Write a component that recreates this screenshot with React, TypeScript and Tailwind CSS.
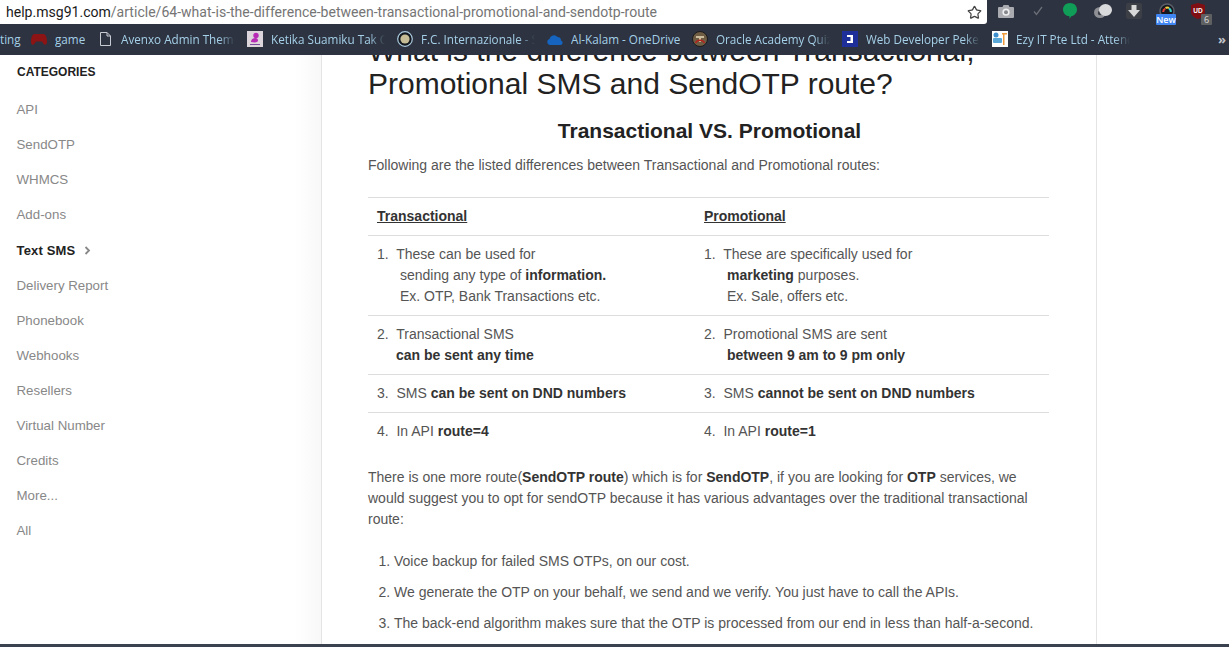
import React from 'react';
import { Star } from 'lucide-react';

const categories = ['API', 'SendOTP', 'WHMCS', 'Add-ons', 'Text SMS', 'Delivery Report', 'Phonebook', 'Webhooks', 'Resellers', 'Virtual Number', 'Credits', 'More...', 'All'];

function Toolbar() {
  return (
    <div className="flex h-6 shrink-0 bg-[#2d3340]">
      <div className="flex w-[987px] items-center justify-between rounded-br-[3px] bg-white pl-[6px] pr-[5px]">
        <div className="truncate font-['Roboto',sans-serif] text-[14.050px] leading-6 text-[#757575]">
          <span className="text-[#1a1a1a]">help.msg91.com</span>/article/64-what-is-the-difference-between-transactional-promotional-and-sendotp-route
        </div>
        <Star size={15} strokeWidth={2} className="shrink-0 text-[#444]" />
      </div>
      <div className="relative flex-1">
        {/* camera */}
        <svg className="absolute left-[11px] top-[5px]" width="16" height="13" viewBox="0 0 16 13">
          <path d="M1 2h3.500L5.500 0h5l1 2H15a1 1 0 0 1 1 1v9a1 1 0 0 1-1 1H1a1 1 0 0 1-1-1V3a1 1 0 0 1 1-1z" fill="#a9abb0" />
          <circle cx="8" cy="7.200" r="3.600" fill="#eeeeee" />
          <circle cx="8" cy="7.200" r="2" fill="#85878d" />
        </svg>
        {/* check */}
        <svg className="absolute left-[46px] top-[6px]" width="10" height="10" viewBox="0 0 10 10">
          <path d="M1 5.500l2.500 3L9 1" fill="none" stroke="#6a6e77" strokeWidth="1.300" />
        </svg>
        {/* green speech bubble */}
        <svg className="absolute left-[76px] top-[3px]" width="14" height="16" viewBox="0 0 14 16">
          <path d="M7 0c3.900 0 7 2.800 7 6.400 0 3.400-2.500 6-5.800 6.800L6.500 16v-2.800C2.800 13 0 10 0 6.400 0 2.800 3.100 0 7 0z" fill="#0f9d58" />
        </svg>
        {/* cloud blob */}
        <svg className="absolute left-[107px] top-[4px]" width="18" height="14" viewBox="0 0 18 14">
          <ellipse cx="6" cy="8.500" rx="6" ry="5.500" fill="#8e9095" />
          <circle cx="6" cy="9" r="2.200" fill="#3a3e47" />
          <ellipse cx="11.500" cy="6" rx="6.500" ry="6" fill="#d9dadc" />
        </svg>
        {/* download */}
        <div className="absolute left-[139px] top-[3px] flex h-[16px] w-[16px] items-center justify-center rounded-[2px] bg-[#3c3f45]">
          <svg width="12" height="12" viewBox="0 0 12 12">
            <path d="M3.500 0h5v5H12L6 12 0 5h3.500z" fill="#d8d8d8" />
          </svg>
        </div>
        {/* colour ring with badge */}
        <svg className="absolute left-[172px] top-[3px]" width="16" height="14" viewBox="0 0 16 14">
          <circle cx="8" cy="8" r="7" fill="#15181e" stroke="#5a5f69" strokeWidth="1.500" />
          <path d="M4.200 9a3.800 3.800 0 0 1 2-3.400" fill="none" stroke="#e53935" strokeWidth="2" />
          <path d="M6.500 5a3.800 3.800 0 0 1 3.500 0" fill="none" stroke="#f4d03f" strokeWidth="2" />
          <path d="M10 5.300A3.800 3.800 0 0 1 11.800 9" fill="none" stroke="#38d0c8" strokeWidth="2" />
        </svg>
        <div className="absolute left-[169px] top-[14px] z-10 h-[11px] w-[20px] rounded-[1px] bg-[#3f86f2] text-center font-['Open_Sans',sans-serif] text-[9px] font-semibold leading-[11px] text-white">New</div>
        {/* uBlock shield */}
        <svg className="absolute left-[204px] top-[3px]" width="14" height="16" viewBox="0 0 14 16">
          <path d="M7 0l7 2v7c0 3-3 5.500-7 7-4-1.500-7-4-7-7V2z" fill="#800f14" />
          <text x="7" y="9.500" textAnchor="middle" fontSize="6.500" fontWeight="700" fill="#fff" fontFamily="Liberation Sans, sans-serif">UD</text>
        </svg>
        <div className="absolute left-[214px] top-[14px] z-10 h-[11px] w-[11px] rounded-[1px] bg-[#5f6062] text-center font-['Open_Sans',sans-serif] text-[9px] leading-[11px] text-[#ddd]">6</div>
      </div>
    </div>
  );
}

function Bookmark({ icon, label, className, fade = true }: { icon: React.ReactNode; label: string; className: string; fade?: boolean }) {
  return (
    <div className={`flex shrink-0 items-center gap-[8px] pr-[12px] ${className}`}>
      <span className="flex h-4 w-4 shrink-0 items-center justify-center">{icon}</span>
      <span className={`overflow-hidden whitespace-nowrap ${fade ? '[mask-image:linear-gradient(to_right,black_86%,transparent)]' : ''}`}>{label}</span>
    </div>
  );
}

function BookmarksBar() {
  return (
    <div className="flex h-[31px] shrink-0 items-center overflow-hidden bg-[#2d3340] font-['Open_Sans',sans-serif] text-[11.700px] text-[#a5d0e8]">
      <span className="w-[31px] shrink-0 overflow-hidden text-left">ting</span>
      <Bookmark
        className="w-[66px]"
        label="game"
        fade={false}
        icon={
          <svg width="16" height="11" viewBox="0 0 16 11">
            <path d="M3.500 0h9c2 0 3.500 3.500 3.500 7.500 0 3.500-2.300 4.300-3.700 2L11 7.500H5l-1.300 2C2.300 11.800 0 11 0 7.500 0 3.500 1.500 0 3.500 0z" fill="#8d1414" />
          </svg>
        }
      />
      <Bookmark
        className="w-[150px]"
        label="Avenxo Admin Theme"
        icon={
          <svg width="11" height="14" viewBox="0 0 11 14">
            <path d="M.5.500h6.500l3.500 3.500v9.500H.5z M7 .5V4h3.500" fill="none" stroke="#c8ccd2" strokeWidth="1" />
          </svg>
        }
      />
      <Bookmark
        className="w-[150px]"
        label="Ketika Suamiku Tak Cinta"
        icon={
          <svg width="16" height="16" viewBox="0 0 16 16">
            <rect width="16" height="16" fill="#dcd6dc" />
            <circle cx="9" cy="4.500" r="2.700" fill="#b62ab6" />
            <path d="M4 11c0-3 2-4 4.500-4 1.500 0 2.500 1 2.500 2.500S9 12 4 11z" fill="#b62ab6" />
            <rect x="3" y="13" width="10" height="1" fill="#7a4a9a" />
          </svg>
        }
      />
      <Bookmark
        className="w-[150px]"
        label="F.C. Internazionale - Sito"
        icon={
          <svg width="16" height="16" viewBox="0 0 16 16">
            <circle cx="8" cy="8" r="7.300" fill="#14181f" stroke="#a9c9de" strokeWidth="1.200" />
            <circle cx="8" cy="8" r="4.600" fill="#c6bd97" />
          </svg>
        }
      />
      <Bookmark
        className="w-[145px]"
        label="Al-Kalam - OneDrive"
        fade={false}
        icon={
          <svg width="16" height="11" viewBox="0 0 16 11">
            <path d="M3 11a3 3 0 0 1-.500-5.900A4.500 4.500 0 0 1 10.500 3 3.500 3.500 0 0 1 14 6.500a2.300 2.300 0 0 1-.500 4.500z" fill="#1565c0" />
          </svg>
        }
      />
      <Bookmark
        className="w-[150px]"
        label="Oracle Academy Quiz Test"
        icon={
          <svg width="16" height="16" viewBox="0 0 16 16">
            <circle cx="8" cy="8" r="7.500" fill="#6e5c44" stroke="#1c1c1c" />
            <rect x="4" y="5" width="8" height="2" fill="#cbbd9c" />
            <rect x="7" y="7" width="2" height="4" fill="#cbbd9c" />
            <path d="M3.500 12a5 5 0 0 1 9 0" fill="none" stroke="#b3241c" strokeWidth="1.500" />
          </svg>
        }
      />
      <Bookmark
        className="w-[150px]"
        label="Web Developer Pekerjaan"
        icon={
          <svg width="16" height="16" viewBox="0 0 16 16">
            <rect width="16" height="16" fill="#1f2f99" />
            <path d="M5 4h6v8H5v-2h3.500V6H5z" fill="#fff" />
          </svg>
        }
      />
      <Bookmark
        className="w-[150px]"
        label="Ezy IT Pte Ltd - Attendance"
        icon={
          <svg width="16" height="16" viewBox="0 0 16 16">
            <rect width="16" height="16" fill="#fff" />
            <circle cx="4" cy="4" r="2.500" fill="#3d8fd0" />
            <rect x="1" y="7" width="9" height="5" rx="1" fill="#5aa7d8" />
            <rect x="11" y="2" width="1.500" height="12" fill="#ef9a3c" />
            <rect x="10" y="2" width="5" height="1.500" fill="#ef9a3c" />
          </svg>
        }
      />
      <span className="ml-auto pr-[3px] text-[13px] font-bold text-[#c0c4ca]">»</span>
    </div>
  );
}

function Sidebar() {
  return (
    <aside className="w-[321px] shrink-0 bg-gradient-to-r from-white from-[92%] to-[#f8f8f8] pl-[17px] pt-[9px]">
      <h3 className="mb-[12px] text-[12px] font-bold leading-[16px] text-[#222]">CATEGORIES</h3>
      <ul className="-ml-[0.500px]">
        {categories.map((cat) => (
          <li
            key={cat}
            className={`flex items-center ${cat === 'Text SMS' ? 'h-[36px] pt-[1px] text-[13px] font-bold tracking-[0.15px] text-[#222]' : 'h-[35px] text-[13.300px] text-[#888]'}`}
          >
            {cat}
            {cat === 'Text SMS' && (
              <svg className="ml-[9px]" width="7" height="9" viewBox="0 0 7 9">
                <path d="M1.500 1l3.500 3.500L1.500 8" fill="none" stroke="#888" strokeWidth="1.800" />
              </svg>
            )}
          </li>
        ))}
      </ul>
    </aside>
  );
}

const rows = [
  [
    <><div>1.&nbsp; These can be used for</div><div className="pl-[23px]">sending any type of <b className="text-[#333]">information.</b></div><div className="pl-[23px]">Ex. OTP, Bank Transactions etc.</div></>,
    <><div>1.&nbsp; These are specifically used for</div><div className="pl-[23px]"><b className="text-[#333]">marketing</b> purposes.</div><div className="pl-[23px]">Ex. Sale, offers etc.</div></>,
  ],
  [
    <><div>2.&nbsp; Transactional SMS</div><div className="pl-[19px]"><b className="text-[#333]">can be sent any time</b></div></>,
    <><div>2.&nbsp; Promotional SMS are sent</div><div className="pl-[23px]"><b className="text-[#333]">between 9 am to 9 pm only</b></div></>,
  ],
  [
    <>3.&nbsp; SMS <b className="text-[#333]">can be sent on DND numbers</b></>,
    <>3.&nbsp; SMS <b className="text-[#333]">cannot be sent on DND numbers</b></>,
  ],
  [
    <>4.&nbsp; In API <b className="text-[#333]">route=4</b></>,
    <>4.&nbsp; In API <b className="text-[#333]">route=1</b></>,
  ],
];

function Article() {
  return (
    <article className="w-[776px] shrink-0 border-x border-[#e4e4e4] bg-white pl-[46px] pr-[47px] text-[14px] leading-[21px] text-[#555]">
      <h1 className="-mt-[21px] text-[30px] leading-[33px] text-[#222]">
        What is the difference between Transactional, Promotional SMS and SendOTP route?
      </h1>
      <h2 className="mt-[18px] pl-[2px] text-center text-[21px] font-bold leading-[26px] text-[#222]">Transactional VS. Promotional</h2>
      <p className="mt-[11px]">Following are the listed differences between Transactional and Promotional routes:</p>
      <table className="mt-[21px] w-[681px] table-fixed border-collapse">
        <thead>
          <tr className="border-y border-[#ddd]">
            <th className="w-[327px] py-[8px] pl-[9px] text-left font-bold text-[#333] underline">Transactional</th>
            <th className="py-[8px] pl-[9px] text-left font-bold text-[#333] underline">Promotional</th>
          </tr>
        </thead>
        <tbody>
          {rows.map((row, i) => (
            <tr key={i} className="border-b border-[#ddd] last:border-b-0">
              <td className="py-[8px] pl-[9px] align-top">{row[0]}</td>
              <td className="py-[8px] pl-[9px] align-top">{row[1]}</td>
            </tr>
          ))}
        </tbody>
      </table>
      <p className="mt-[17px]">
        There is one more route(<b className="text-[#333]">SendOTP route</b>) which is for <b className="text-[#333]">SendOTP</b>, if you are looking for <b className="text-[#333]">OTP</b> services, we would suggest you to opt for sendOTP because it has various advantages over the traditional transactional route:
      </p>
      <ol className="mt-[21px] list-decimal pl-[26px]">
        <li className="mb-[10px]">Voice backup for failed SMS OTPs, on our cost.</li>
        <li className="mb-[10px]">We generate the OTP on your behalf, we send and we verify. You just have to call the APIs.</li>
        <li className="mb-[10px]">The back-end algorithm makes sure that the OTP is processed from our end in less than half-a-second.</li>
      </ol>
    </article>
  );
}

export default function App() {
  return (
    <div className="flex h-[647px] w-[1229px] flex-col overflow-hidden bg-white font-['Liberation_Sans',Arial,sans-serif]">
      <Toolbar />
      <BookmarksBar />
      <main className="flex min-h-0 flex-1 overflow-hidden">
        <Sidebar />
        <Article />
      </main>
      <div className="h-[3px] shrink-0 bg-[#3a4250]" />
    </div>
  );
}
